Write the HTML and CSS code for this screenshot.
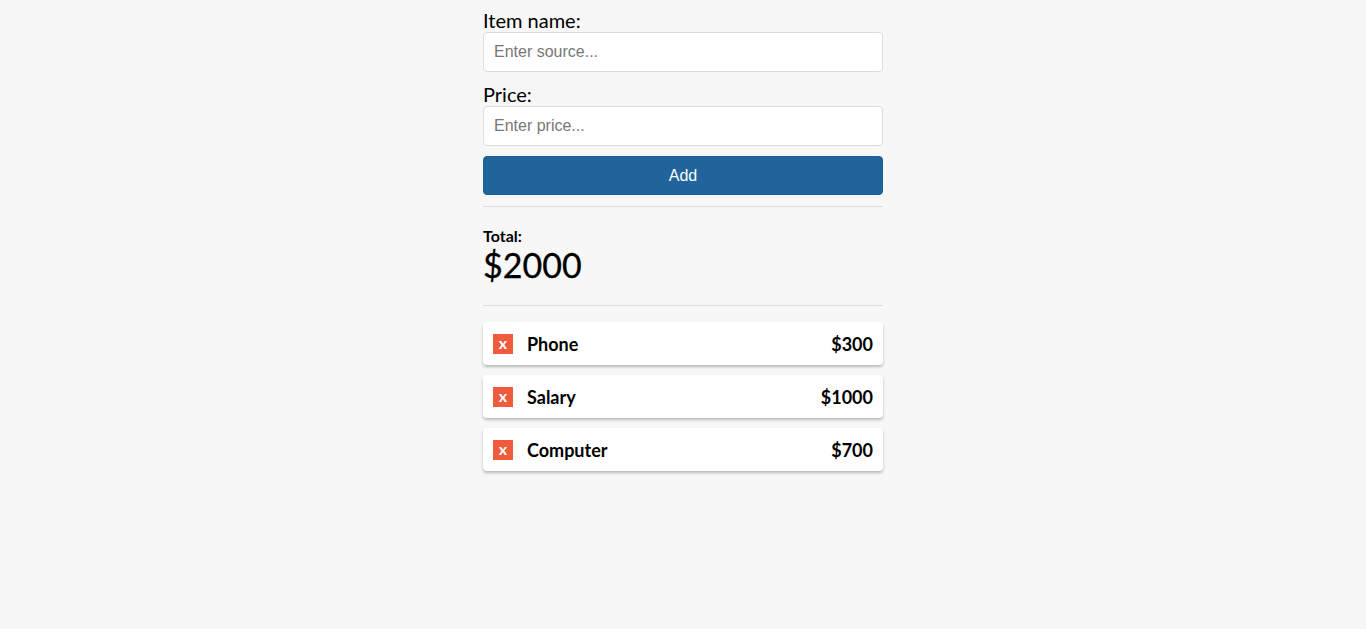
FILE: index.html
```html
<!DOCTYPE html>
<html>
<head>
<meta charset="utf-8">
<link rel="stylesheet" href="styles.css">
</head>
<body>
<div class="app">
  <form class="form">
    <label class="label">Item name:</label>
    <input class="input" type="text" placeholder="Enter source...">
    <label class="label">Price:</label>
    <input class="input" type="text" placeholder="Enter price...">
    <button class="btn" type="button">Add</button>
  </form>
  <hr class="rule">
  <div class="total">
    <div class="total-label">Total:</div>
    <div class="total-value">$2000</div>
  </div>
  <hr class="rule">
  <ul class="list">
    <li class="item"><span class="del">x</span><span class="name">Phone</span><span class="price">$300</span></li>
    <li class="item"><span class="del">x</span><span class="name">Salary</span><span class="price">$1000</span></li>
    <li class="item"><span class="del">x</span><span class="name">Computer</span><span class="price">$700</span></li>
  </ul>
</div>
</body>
</html>
```

FILE: styles.css
```css
html, body {
  margin: 0;
  padding: 0;
}
body {
  background: #f7f7f7;
  font-family: Lato, "Liberation Sans", sans-serif;
  color: #000;
  padding: 8px 0 40px 0;
}
.app {
  width: 400px;
  margin: 0 auto;
}
.form {
  display: flex;
  flex-direction: column;
}
.label {
  font-size: 20px;
  line-height: 24px;
}
.input {
  box-sizing: border-box;
  height: 40px;
  margin: 0 0 10px 0;
  padding: 0 10px;
  border: 1px solid #dcdcdc;
  border-radius: 4px;
  background: #fff;
  font-family: "Liberation Sans", Arial, sans-serif;
  font-size: 16px;
  outline: none;
}
.input::placeholder {
  color: #777;
}
.btn {
  box-sizing: border-box;
  height: 39px;
  margin: 0;
  border: 1px solid #1d5e93;
  border-radius: 4px;
  background: #20649b;
  color: #fff;
  font-family: "Liberation Sans", Arial, sans-serif;
  font-size: 16px;
}
.rule {
  border: 0;
  border-top: 1px solid #dddddd;
  margin: 11px 0 0 0;
  height: 0;
}
.total {
  padding: 19px 0 20px 0;
}
.total-label {
  font-size: 16px;
  font-weight: 700;
  line-height: 19px;
}
.total-value {
  font-size: 34px;
  line-height: 40px;
  -webkit-text-stroke: 0.3px #000;
}
.total + .rule {
  margin: 0;
}
.list {
  list-style: none;
  margin: 16px 0 0 0;
  padding: 0;
  display: flex;
  flex-direction: column;
  gap: 10px;
}
.item {
  display: flex;
  align-items: center;
  height: 43px;
  box-sizing: border-box;
  padding: 0 10px;
  background: #fff;
  border-radius: 4px;
  box-shadow: 0 2px 3px rgba(0, 0, 0, 0.25);
}
.del {
  width: 20px;
  height: 20px;
  background: #ef5b3c;
  color: #fff;
  font-size: 16px;
  font-weight: 700;
  display: flex;
  align-items: center;
  justify-content: center;
  line-height: 1;
  padding-bottom: 2px;
  box-sizing: border-box;
}
.name {
  margin-left: 14px;
  font-size: 18px;
  font-weight: 700;
  flex: 1;
}
.price {
  font-size: 18px;
  font-weight: 700;
}
```
